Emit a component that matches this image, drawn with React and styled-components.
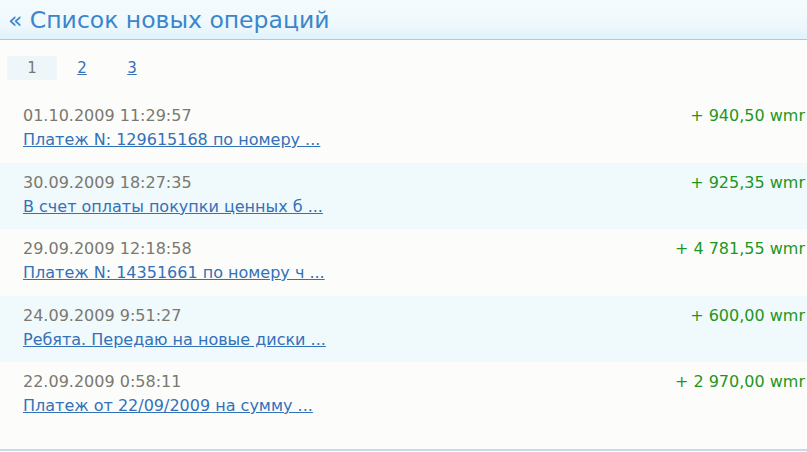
import styled, { createGlobalStyle } from 'styled-components';

const Global = createGlobalStyle`
html, body {
margin: 0;
padding: 0;
background: #fcfdfb;
overflow: hidden;
}
body {
font-family: "DejaVu Sans", Verdana, sans-serif;
}
`

const Page = styled.div`
width: 807px;
height: 452px;
display: flex;
flex-direction: column;
`

const Header = styled.div`
height: 40px;
box-sizing: border-box;
padding-left: 8px;
display: flex;
align-items: center;
background: linear-gradient(to bottom, #f5fbfd 0%, #eef8fc 65%, #dff2fb 100%);
border-bottom: 1px solid #a9c9e8;
`

const Title = styled.h1`
margin: 0;
font-weight: normal;
font-size: 23.5px;
color: #3a86cc;
line-height: 1;
padding-top: 3px;
`

const Pager = styled.div`
display: flex;
gap: 20px;
padding: 16px 0 0 7px;
height: 41px;
box-sizing: border-box;
`

const PageItem = styled.a`
width: 50px;
height: 24px;
display: flex;
align-items: center;
justify-content: center;
font-size: 15px;
color: ${p => (p.$active ? '#7a7870' : '#3371b8')};
text-decoration: ${p => (p.$active ? 'none' : 'underline')};
background: ${p => (p.$active ? '#eef6fa' : 'transparent')};
margin-left: ${p => (p.$active ? '0' : '-20px')};
`

const List = styled.div`
margin-top: 15px;
display: flex;
flex-direction: column;
`

const Row = styled.div`
height: 66.5px;
box-sizing: border-box;
padding: 10px 0 0 23px;
display: flex;
justify-content: space-between;
background: ${p => (p.$alt ? '#f0f9fc' : 'transparent')};
`

const Info = styled.div`
display: flex;
flex-direction: column;
gap: 4px;
`

const Date = styled.span`
font-size: 16px;
color: #7a7870;
line-height: 20px;
`

const Link = styled.a`
font-size: 16px;
color: #3371b8;
text-decoration: underline;
line-height: 20px;
`

const Amount = styled.span`
font-size: 16px;
color: #1e961e;
line-height: 20px;
white-space: nowrap;
margin-right: 2px;
`

const Footer = styled.div`
margin-top: auto;
margin-bottom: 1px;
height: 2px;
background: #c7d9ed;
`

const ops = [
  { date: '01.10.2009 11:29:57', text: 'Платеж N: 129615168 по номеру ...', sum: '+ 940,50 wmr' },
  { date: '30.09.2009 18:27:35', text: 'В счет оплаты покупки ценных б ...', sum: '+ 925,35 wmr' },
  { date: '29.09.2009 12:18:58', text: 'Платеж N: 14351661 по номеру ч ...', sum: '+ 4 781,55 wmr' },
  { date: '24.09.2009 9:51:27', text: 'Ребята. Передаю на новые диски ...', sum: '+ 600,00 wmr' },
  { date: '22.09.2009 0:58:11', text: 'Платеж от 22/09/2009 на сумму ...', sum: '+ 2 970,00 wmr' },
]

const App = () => {
  return (
    <Page>
      <Global />
      <Header>
        <Title>« Список новых операций</Title>
      </Header>
      <Pager>
        <PageItem $active>1</PageItem>
        <PageItem href="#">2</PageItem>
        <PageItem href="#">3</PageItem>
      </Pager>
      <List>
        {ops.map((op, i) => (
          <Row key={op.date} $alt={i % 2 === 1}>
            <Info>
              <Date>{op.date}</Date>
              <Link href="#">{op.text}</Link>
            </Info>
            <Amount>{op.sum}</Amount>
          </Row>
        ))}
      </List>
      <Footer />
    </Page>
  )
}

export default App
